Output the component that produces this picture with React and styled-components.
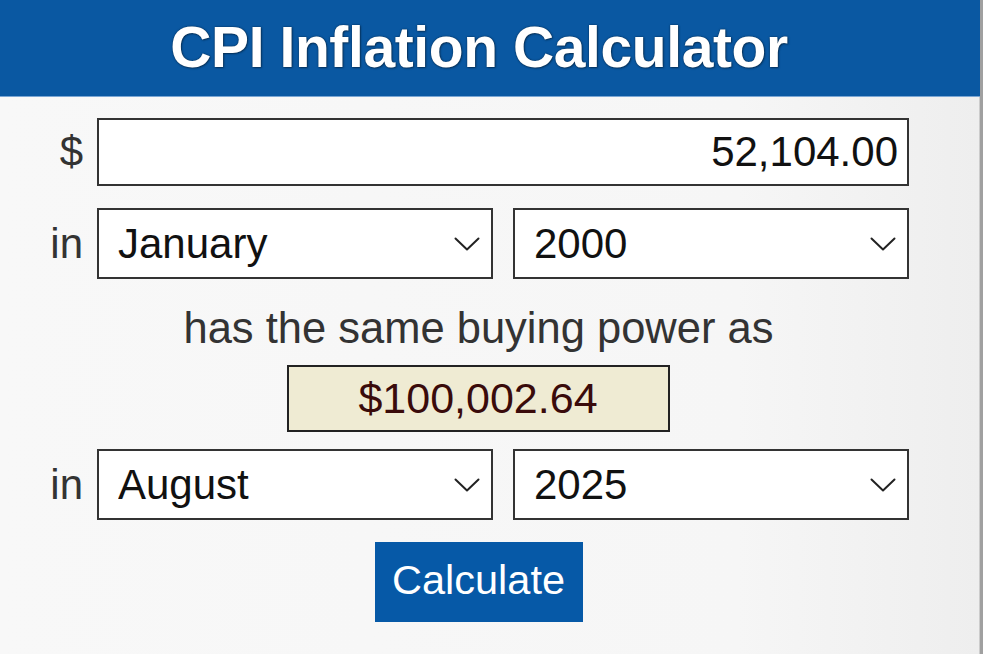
import React from "react";
import styled, { createGlobalStyle } from "styled-components";

const Global = createGlobalStyle`
  html, body { margin: 0; padding: 0; }
  body {
    font-family: "Liberation Sans", Arial, Helvetica, sans-serif;
    background: #f6f6f6;
  }
  * { box-sizing: border-box; }
`;

const Page = styled.div`
  width: 983px;
  height: 654px;
  overflow: hidden;
  display: flex;
  flex-direction: column;
  background: linear-gradient(to right, #f8f8f8 0%, #f6f6f6 75%, #eeeeee 99.6%, #a0a0a0 99.7%);
`;

const Header = styled.header`
  height: 97px;
  width: 980px;
  background: #0a58a2;
  border-bottom: 1px solid #7aa6d4;
  display: flex;
  align-items: center;
  justify-content: center;
  padding-right: 22px;
  padding-bottom: 2px;
`;

const Title = styled.h1`
  margin: 0;
  color: #ffffff;
  font-family: "Liberation Sans", Arial, sans-serif;
  font-weight: 700;
  font-size: 57px;
  letter-spacing: -0.4px;
  text-shadow: 0 0 2px rgba(0, 0, 0, 0.55), 1px 1px 2px rgba(0, 0, 0, 0.35);
`;

const Main = styled.main`
  display: flex;
  flex-direction: column;
  align-items: stretch;
  padding-top: 21px;
`;

const Row = styled.div`
  display: grid;
  grid-template-columns: 83px 1fr;
  column-gap: 14px;
  align-items: center;
  width: 909px;
  margin-top: ${(p) => p.$mt || 0}px;
`;

const Label = styled.span`
  text-align: right;
  font-size: 42px;
  color: #333333;
`;

const Fields = styled.div`
  display: grid;
  grid-template-columns: 1fr 1fr;
  column-gap: 20px;
`;

const TextInput = styled.input`
  height: 68px;
  width: 100%;
  border: 2px solid #333333;
  background: #ffffff;
  font-family: "Liberation Sans", Arial, sans-serif;
  font-size: 42px;
  color: #111111;
  text-align: right;
  padding: 0 9px 0 10px;
  outline: none;
`;

const SelectWrap = styled.div`
  position: relative;
  height: 71px;
`;

const Select = styled.select`
  appearance: none;
  -webkit-appearance: none;
  width: 100%;
  height: 100%;
  border: 2px solid #333333;
  border-radius: 0;
  background: #ffffff;
  font-family: "Liberation Sans", Arial, sans-serif;
  font-size: 42px;
  color: #111111;
  padding: 0 60px 0 19px;
  outline: none;
`;

const Chevron = styled.svg`
  position: absolute;
  right: 13px;
  top: 29px;
  width: 26px;
  height: 14px;
  pointer-events: none;
`;

const Phrase = styled.div`
  margin-top: 23px;
  text-align: center;
  font-size: 43.5px;
  line-height: 52px;
  color: #333333;
  padding-right: 26px;
`;

const ResultRow = styled.div`
  display: flex;
  justify-content: center;
  margin-top: 11px;
  padding-right: 27px;
`;

const Result = styled.div`
  width: 383px;
  height: 67px;
  border: 2px solid #222222;
  background: #efebd3;
  color: #3a0b0b;
  font-size: 43px;
  display: flex;
  align-items: center;
  justify-content: center;
`;

const ButtonRow = styled.div`
  display: flex;
  justify-content: center;
  margin-top: 22px;
  padding-right: 26px;
`;

const Button = styled.button`
  width: 208px;
  height: 80px;
  border: none;
  background: #0659a7;
  color: #ffffff;
  font-family: "Liberation Sans", Arial, sans-serif;
  font-size: 41.5px;
  padding: 0;
  padding-bottom: 4px;
  cursor: pointer;
`;

const ChevronIcon = () => (
  <Chevron viewBox="0 0 26 14">
    <path d="M1.5 1.5 L13 12.5 L24.5 1.5" fill="none" stroke="#222" strokeWidth="2" strokeLinecap="round" strokeLinejoin="round" />
  </Chevron>
);

const months = ["January","February","March","April","May","June","July","August","September","October","November","December"];
const years = Array.from({ length: 2025 - 1913 + 1 }, (_, i) => String(1913 + i));

const SelectBox = ({ value, options }) => (
  <SelectWrap>
    <Select defaultValue={value}>
      {options.map((o) => (
        <option key={o} value={o}>{o}</option>
      ))}
    </Select>
    <ChevronIcon />
  </SelectWrap>
);

export default function App() {
  return (
    <Page>
      <Global />
      <Header>
        <Title>CPI Inflation Calculator</Title>
      </Header>
      <Main>
        <Row>
          <Label>$</Label>
          <TextInput defaultValue="52,104.00" />
        </Row>
        <Row $mt={22}>
          <Label>in</Label>
          <Fields>
            <SelectBox value="January" options={months} />
            <SelectBox value="2000" options={years} />
          </Fields>
        </Row>
        <Phrase>has the same buying power as</Phrase>
        <ResultRow>
          <Result>$100,002.64</Result>
        </ResultRow>
        <Row $mt={17}>
          <Label>in</Label>
          <Fields>
            <SelectBox value="August" options={months} />
            <SelectBox value="2025" options={years} />
          </Fields>
        </Row>
        <ButtonRow>
          <Button>Calculate</Button>
        </ButtonRow>
      </Main>
    </Page>
  );
}
